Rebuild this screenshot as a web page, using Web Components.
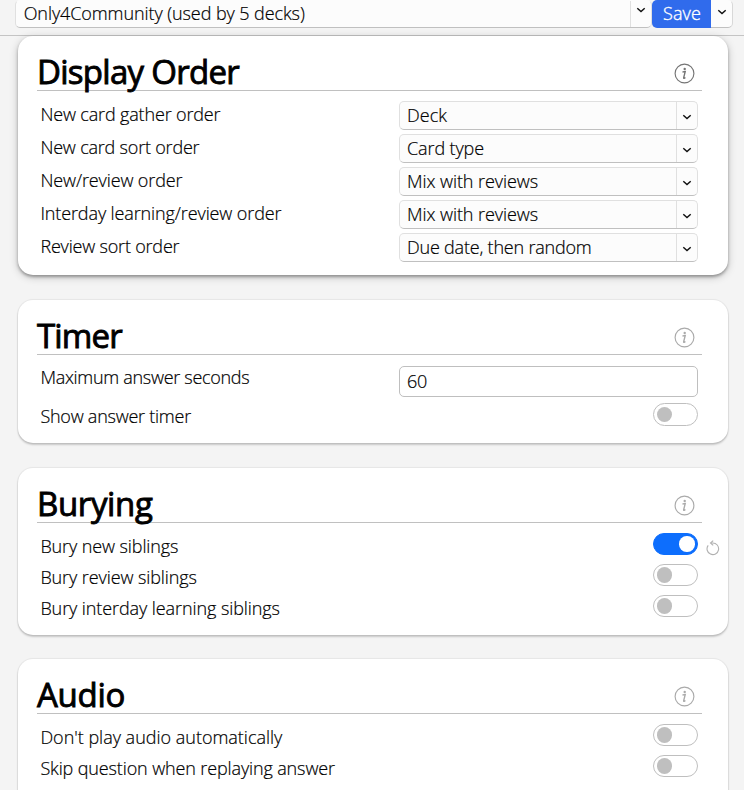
<!DOCTYPE html>
<html lang="en">
<head>
<meta charset="utf-8">
<title>Deck Options</title>
<style>
html, body { margin: 0; height: 790px; overflow: hidden; background: #f4f4f4; }
body { font: 300 18px "Open Sans", "Noto Sans", sans-serif; color: #000; -webkit-text-stroke: .2px; }
</style>
</head>
<body>
<deck-options></deck-options>
<script>
const define = (name, html, setup) => {
  const template = document.createElement('template');
  template.innerHTML = html;
  customElements.define(name, class extends HTMLElement {
    connectedCallback() {
      if (this.shadowRoot) return;
      this.attachShadow({ mode: 'open' }).append(template.content.cloneNode(true));
      if (setup) setup(this, this.shadowRoot);
    }
  });
};

// Text whose tracking is adjusted so the line takes the width given in "w".
define('fit-text', `<style>
  :host { display: inline-block; white-space: pre; }
</style><span><slot></slot></span>`, (host, root) => {
  const span = root.querySelector('span');
  const n = host.textContent.length;
  const spacing = (Number(host.getAttribute('w')) - span.getBoundingClientRect().width) / n;
  span.style.letterSpacing = spacing.toFixed(3) + 'px';
});

define('chevron-icon', `<style>
  :host { display: block; width: 10px; height: 8px; }
  svg { display: block; }
</style><svg width="10" height="8" viewBox="0 0 10 8"><path d="M1.3 2.3 L5 5.5 L8.7 2.3" fill="none" stroke="#111" stroke-width="1.5"/></svg>`);

define('info-icon', `<style>
  :host { display: block; width: 21px; height: 21px; color: #aaa; }
  svg { display: block; }
</style><svg width="21" height="21" viewBox="0 0 21 21"><circle cx="10.5" cy="10.5" r="9.4" fill="none" stroke="currentColor" stroke-width="1.15"/><circle cx="10.7" cy="6" r="1.2" fill="currentColor"/><path d="M8.5 9 L11.2 8.6 L9.7 14.6 Q9.5 15.8 10.5 15.2 L11.4 14.4" fill="none" stroke="currentColor" stroke-width="1.4"/></svg>`);

define('reset-icon', `<style>
  :host { display: block; width: 14px; height: 16px; }
  svg { display: block; }
</style><svg width="14" height="16" viewBox="0 0 14 16"><path d="M2.2 5.3 A5.8 5.8 0 1 0 6.6 3 L5 3" fill="none" stroke="#b0b0b0" stroke-width="1.1"/><path d="M7.2 .6 L4.5 3 L7.2 5.4" fill="none" stroke="#b0b0b0" stroke-width="1.1"/></svg>`);

define('select-box', `<style>
  :host { display: flex; box-sizing: border-box; width: 299px; height: 29px; background: #fcfcfc;
    border: 1px solid #e0e0e0; border-bottom-color: #c0c0c0; border-radius: 5px; }
  .value { flex: 1; padding-left: 7px; line-height: var(--value-line, 27px); }
  .arrow { box-sizing: border-box; width: 21px; border-left: 1px solid #e0e0e0; padding: var(--arrow-pad, 11px) 0 0 5px; }
</style><div class="value"><slot></slot></div><div class="arrow"><chevron-icon></chevron-icon></div>`);

define('text-input', `<style>
  :host { display: block; box-sizing: border-box; width: 299px; height: 31px; background: #fff;
    border: 1px solid #bfbfbf; border-radius: 5px; padding-left: 7px; line-height: 29px; }
</style><slot></slot>`);

define('toggle-switch', `<style>
  :host { display: block; box-sizing: border-box; width: 45px; height: 22px; border: 1px solid #bfbfbf;
    border-radius: 12px; padding: 2.4px 2.6px; background: #fff; }
  i { display: block; width: 15.4px; height: 15.4px; border-radius: 50%; background: #bfbfbf; }
  :host([on]) { background: #0d6efd; border-color: #0d6efd; padding-left: 25.4px; }
  :host([on]) i { background: #fff; }
</style><i></i>`);

define('option-row', `<style>
  :host { display: grid; grid-template-columns: 359px 299px 21px; align-items: start; height: 33px; }
  .label { line-height: var(--label-line, 26px); padding-left: .4px; }
  .control { display: flex; justify-content: flex-end; }
  .extra { padding: 7px 0 0 8px; }
</style><div class="label"><slot></slot></div><div class="control"><slot name="control"></slot></div><div class="extra"><slot name="extra"></slot></div>`);

define('option-card', `<style>
  :host { display: block; box-sizing: border-box; background: #fff; border-radius: 15px; padding: 0 26px 0 19px;
    box-shadow: 0 0 1px 1px rgba(0,0,0,.06), 0 2px 2px rgba(0,0,0,.18); }
  :host([active]) { box-shadow: 0 2px 3px rgba(0,0,0,.3), 0 2px 8px rgba(0,0,0,.22); }
  :host([active]) info-icon { color: #757575; }
  header { display: flex; justify-content: space-between; box-sizing: border-box; height: 55px;
    border-bottom: 1px solid #c0c0c0; padding-right: 6.6px; }
  h1 { margin: 0; font-size: 33px; font-weight: 400; line-height: 46px; padding-top: 13px; -webkit-text-stroke: .9px; }
  info-icon { margin-top: var(--icon-top, 26.6px); }
  .rows { padding: 10px 0 0 3px; }
</style><header><h1><slot name="title"></slot></h1><info-icon></info-icon></header><div class="rows"><slot></slot></div>`);

define('save-button', `<style>
  :host { display: flex; height: 28px; }
  .save { box-sizing: border-box; width: 59px; background: #306bec; color: #fff; border-radius: 5px 0 0 5px; padding-left: 11px; line-height: 27px; -webkit-text-stroke: .35px; }
  .more { box-sizing: border-box; width: 22px; background: #fcfcfc; border: 1px solid #d8d8d8; border-left: 0; border-top-color: transparent;
    border-bottom-color: #c0c0c0; border-radius: 0 5px 5px 0; padding: 7px 0 0 6px; }
</style><div class="save"><slot></slot></div><div class="more"><chevron-icon></chevron-icon></div>`);

define('deck-options', `<style>
  :host { display: block; width: 744px; height: 790px; overflow: hidden; }
  .bar { display: flex; gap: 0; box-sizing: border-box; height: 36px; padding-left: 15px; border-bottom: 1px solid #c4c4c4; }
  .bar select-box { width: 637px; height: 28px; border-top-color: transparent; --value-line: 25px; --arrow-pad: 5px; }
  .bar select-box fit-text { padding-left: .7px; }
  main { display: grid; grid-template-columns: 710px; grid-template-rows: 239px 143px 167px 160px; row-gap: 25px; padding-left: 18px; }
  .toggles option-row { height: 31px; }
  .timer option-row:first-of-type { height: 38px; --label-line: 24px; }
  .timer text-input { margin-top: 1px; }
  .timer toggle-switch { height: 23px; padding-top: 3px; }
  .audio { margin-top: -1px; --icon-top: 27.4px; }
</style>
<div class="bar"><select-box><fit-text w="281">Only4Community (used by 5 decks)</fit-text></select-box><save-button><fit-text w="38">Save</fit-text></save-button></div>
<main>
  <option-card active><fit-text slot="title" w="202">Display Order</fit-text>
    <option-row><fit-text w="180">New card gather order</fit-text><select-box slot="control"><fit-text w="40">Deck</fit-text></select-box></option-row>
    <option-row><fit-text w="159">New card sort order</fit-text><select-box slot="control"><fit-text w="77">Card type</fit-text></select-box></option-row>
    <option-row><fit-text w="142">New/review order</fit-text><select-box slot="control"><fit-text w="131">Mix with reviews</fit-text></select-box></option-row>
    <option-row><fit-text w="241">Interday learning/review order</fit-text><select-box slot="control"><fit-text w="131">Mix with reviews</fit-text></select-box></option-row>
    <option-row><fit-text w="139">Review sort order</fit-text><select-box slot="control"><fit-text w="184.5">Due date, then random</fit-text></select-box></option-row>
  </option-card>
  <option-card class="timer"><fit-text slot="title" w="85">Timer</fit-text>
    <option-row><fit-text w="209">Maximum answer seconds</fit-text><text-input slot="control"><fit-text w="20">60</fit-text></text-input></option-row>
    <option-row><fit-text w="150.5">Show answer timer</fit-text><toggle-switch slot="control"></toggle-switch></option-row>
  </option-card>
  <option-card class="toggles"><fit-text slot="title" w="115.5">Burying</fit-text>
    <option-row><fit-text w="138">Bury new siblings</fit-text><toggle-switch slot="control" on></toggle-switch><reset-icon slot="extra"></reset-icon></option-row>
    <option-row><fit-text w="156.5">Bury review siblings</fit-text><toggle-switch slot="control"></toggle-switch></option-row>
    <option-row><fit-text w="239.5">Bury interday learning siblings</fit-text><toggle-switch slot="control"></toggle-switch></option-row>
  </option-card>
  <option-card class="toggles audio"><fit-text slot="title" w="88">Audio</fit-text>
    <option-row><fit-text w="242">Don't play audio automatically</fit-text><toggle-switch slot="control"></toggle-switch></option-row>
    <option-row><fit-text w="294.5">Skip question when replaying answer</fit-text><toggle-switch slot="control"></toggle-switch></option-row>
  </option-card>
</main>`);
</script>
</body>
</html>
